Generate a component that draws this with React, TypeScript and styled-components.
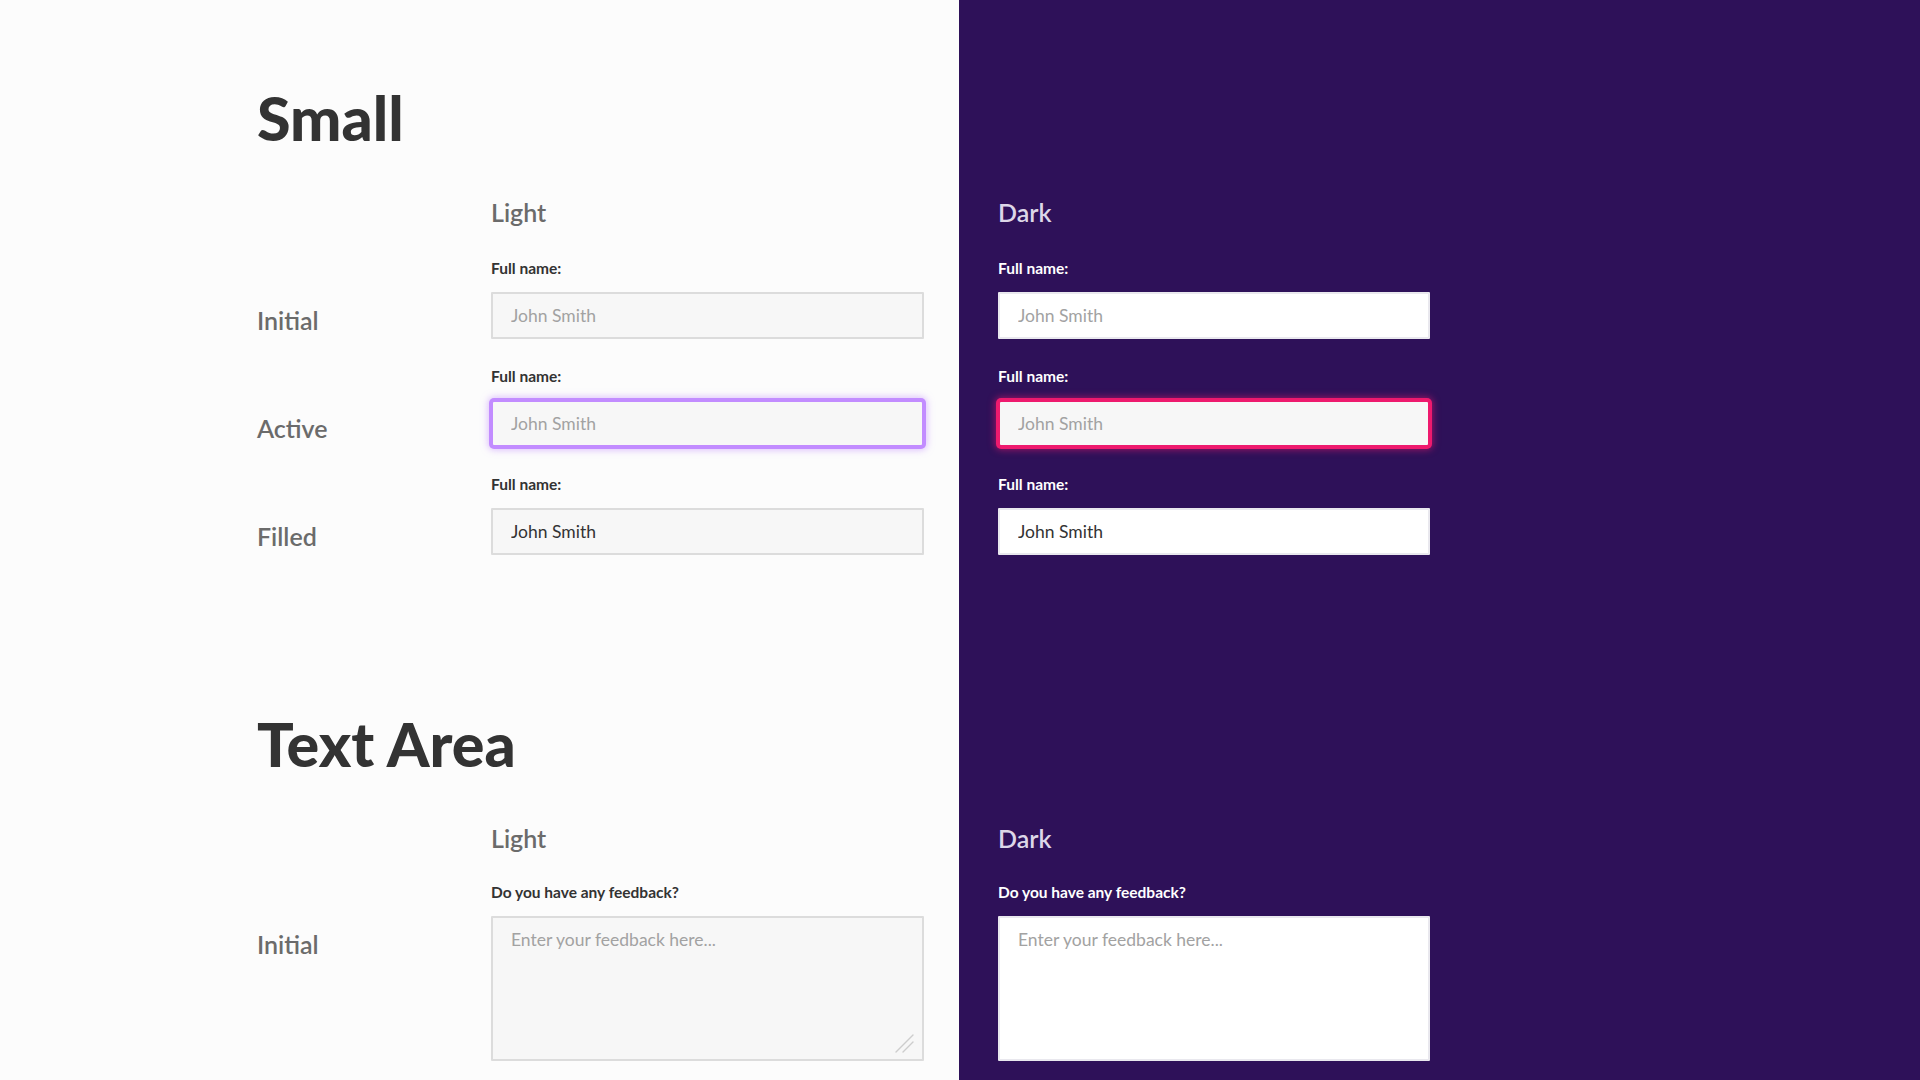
import React from 'react';
import styled, { createGlobalStyle, css } from 'styled-components';

type Tone = 'light' | 'dark';
type FieldState = 'initial' | 'active' | 'filled';

const GlobalStyle = createGlobalStyle`
  html, body {
    margin: 0;
    padding: 0;
    overflow: hidden;
  }
  body {
    font-family: Lato, "Source Sans Pro", "Noto Sans", sans-serif;
  }
`;

const rows: { label: string; state: FieldState }[] = [
  { label: 'Initial', state: 'initial' },
  { label: 'Active', state: 'active' },
  { label: 'Filled', state: 'filled' },
];

const tones: Tone[] = ['light', 'dark'];

const ResizeGrip: React.FC = () => (
  <Grip width="20" height="20" viewBox="0 0 20 20" aria-hidden>
    <path d="M2 19 L19 2 M9 19 L19 9" stroke="#cdcdcd" strokeWidth="1.4" strokeLinecap="round" fill="none" />
  </Grip>
);

const App: React.FC = () => {
  return (
    <Page>
      <GlobalStyle />
      <Section>
        <Heading>Small</Heading>
        <Grid>
          <span />
          <ColumnHead $tone="light">Light</ColumnHead>
          <ColumnHead $tone="dark">Dark</ColumnHead>
        </Grid>
        {rows.map((row) => (
          <Row key={row.label}>
            <RowLabel>{row.label}</RowLabel>
            {tones.map((tone) => (
              <Field key={tone}>
                <FieldLabel $tone={tone}>Full name:</FieldLabel>
                <TextInput
                  $tone={tone}
                  $state={row.state}
                  placeholder="John Smith"
                  defaultValue={row.state === 'filled' ? 'John Smith' : undefined}
                  readOnly
                />
              </Field>
            ))}
          </Row>
        ))}
      </Section>

      <Section $gap>
        <Heading>Text Area</Heading>
        <Grid $tight>
          <span />
          <ColumnHead $tone="light">Light</ColumnHead>
          <ColumnHead $tone="dark">Dark</ColumnHead>
        </Grid>
        <Row>
          <RowLabel>Initial</RowLabel>
          {tones.map((tone) => (
            <Field key={tone}>
              <FieldLabel $tone={tone}>Do you have any feedback?</FieldLabel>
              <AreaWrap>
                <TextArea $tone={tone} placeholder="Enter your feedback here..." readOnly />
                {tone === 'light' && <ResizeGrip />}
              </AreaWrap>
            </Field>
          ))}
        </Row>
      </Section>
    </Page>
  );
};

// Styled components
const Page = styled.div`
  box-sizing: border-box;
  min-height: 100vh;
  padding: 82px 0 0 257px;
  background: linear-gradient(90deg, #fcfcfc 0, #fcfcfc 959px, #2e1159 959px);
`;

const Section = styled.section<{ $gap?: boolean }>`
  margin-top: ${(p) => (p.$gap ? '153px' : '0')};
`;

const Heading = styled.h1`
  margin: 0 0 43px;
  font-size: 61px;
  line-height: 72px;
  font-weight: 900;
  color: #333333;
`;

const columns = css`
  display: grid;
  grid-template-columns: 160px 433px 432px;
  column-gap: 74px;
`;

const Grid = styled.div<{ $tight?: boolean }>`
  ${columns}
  margin-bottom: ${(p) => (p.$tight ? '29px' : '31px')};
`;

const ColumnHead = styled.div<{ $tone: Tone }>`
  font-size: 25px;
  line-height: 30px;
  font-weight: 600;
  color: ${(p) => (p.$tone === 'dark' ? '#ddd7e8' : '#6b6b6b')};
`;

const Row = styled.div`
  ${columns}
  margin-bottom: 27px;
`;

const RowLabel = styled.div`
  padding-top: 46px;
  font-size: 25px;
  line-height: 32px;
  font-weight: 600;
  color: #6b6b6b;
`;

const Field = styled.div`
  display: flex;
  flex-direction: column;
  gap: 14px;
`;

const FieldLabel = styled.label<{ $tone: Tone }>`
  font-size: 15.5px;
  line-height: 20px;
  font-weight: 700;
  color: ${(p) => (p.$tone === 'dark' ? '#ffffff' : '#333333')};
`;

const fieldBase = css<{ $tone: Tone }>`
  box-sizing: border-box;
  width: 100%;
  margin: 0;
  border: 2px solid ${(p) => (p.$tone === 'dark' ? '#e9e8ee' : '#dcdcdc')};
  border-radius: 1px;
  background: ${(p) => (p.$tone === 'dark' ? '#ffffff' : '#f7f7f7')};
  font-family: Lato, "Source Sans Pro", sans-serif;
  font-size: 17.5px;
  color: #333333;
  outline: none;

  &::placeholder {
    color: #a2a2a2;
  }
`;

const TextInput = styled.input<{ $tone: Tone; $state: FieldState }>`
  ${fieldBase}
  height: 47px;
  padding: 0 18px;

  ${(p) => {
    if (p.$state !== 'active') return '';
    const c = p.$tone === 'dark' ? '#ee1a6e' : '#c28cff';
    const glow = p.$tone === 'dark' ? 'rgba(238, 26, 110, 0.55)' : 'rgba(194, 140, 255, 0.55)';
    return `
      background: #f7f7f7;
      border-color: ${c};
      border-radius: 3px;
      box-shadow: 0 0 0 2px ${c}, 0 0 7px 3px ${glow};
    `;
  }}
`;

const AreaWrap = styled.div`
  position: relative;
`;

const TextArea = styled.textarea<{ $tone: Tone }>`
  ${fieldBase}
  display: block;
  height: 145px;
  padding: 10px 18px;
  line-height: 24px;
  resize: none;
`;

const Grip = styled.svg`
  position: absolute;
  right: 10px;
  bottom: 8px;
  pointer-events: none;
`;

export default App;
